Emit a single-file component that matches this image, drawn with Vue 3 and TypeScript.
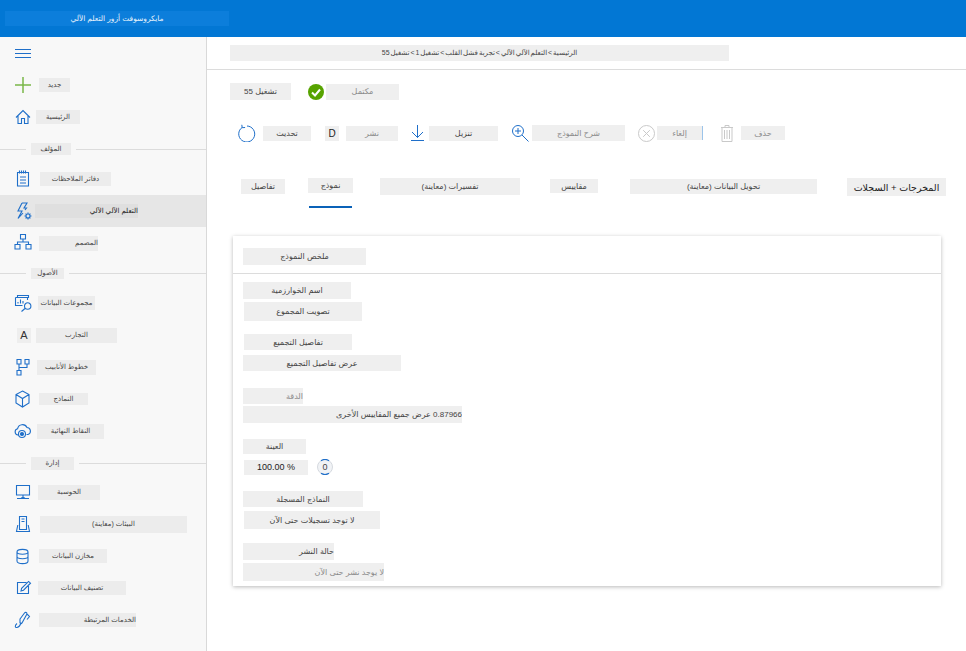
<script setup lang="ts">
interface Nav { kind: 'item' | 'section'; t: string; icon?: string[]; color?: string; ml?: number; w?: number; h?: number; end?: boolean; active?: boolean; letter?: boolean; dots?: string[]; rowH?: number; lift?: number; }
interface Tool { t?: string; icon?: string[]; ml: number; w: number; h: number; muted?: boolean; tint?: string; edge?: boolean; }
interface Tab { t: string; w: number; h: number; ml: number; top: number; active?: boolean; big?: boolean; }
interface Field { t: string; w: number; h: number; mt: number; ml: number; end?: boolean; muted?: boolean; strong?: boolean; info?: boolean; }

const nav: Nav[] = [
  { kind: 'item', t: '', icon: ['M1 5.500h16M1 9.500h16M1 13.500h16'] },
  { kind: 'item', t: 'جديد', icon: ['M9 1v16M1 9h16'], color: '#7ab648', ml: 7, w: 31, h: 14 },
  { kind: 'item', t: 'الرئيسية', icon: ['M2 9.500 9 2.500l7 7M4 7.500v8h3.500v-5h3v5H14v-8'], ml: 4, w: 44, h: 14 },
  { kind: 'section', t: 'المؤلف', w: 40, h: 12, rowH: 30, lift: -2 },
  { kind: 'item', t: 'دفاتر الملاحظات', icon: ['M3.500 2.500h11v13.500h-11zM5.500 .5v3M7.500 .5v3M9.500 .5v3M11.500 .5v3M6 7h6M6 10h6M6 13h6'], ml: 8, w: 71, h: 14 },
  { kind: 'item', t: 'التعلم الآلي الآلي', icon: ['M8 1 4 9h4l-4 7.500 5-5.500M8 1h5l-3 5h2.500L11 8', 'M14 10.500v1M14 16.500v1M10.500 14h1M16.500 14h1M11.600 11.600l.7.7M15.700 15.700l.7.7M16.400 11.600l-.7.7M12.300 15.700l-.7.7M16 14a2 2 0 1 1-4 0 2 2 0 0 1 4 0z'], ml: 3, w: 103, h: 14, end: true, active: true },
  { kind: 'item', t: 'المصمم', icon: ['M6.500 .5h5v4.500h-5zM9 5v3M3.500 10.500V8h11v2.500M1 10.500h5v4.500H1zM12 10.500h5v4.500h-5z'], ml: 7, w: 59, h: 15, end: true },
  { kind: 'section', t: 'الأصول', w: 33, h: 11, rowH: 28, lift: 0 },
  { kind: 'item', t: 'مجموعات البيانات', icon: ['M3.500 3V1.500h11V4M1.500 3.500h12V6M1.500 3.500v8h7M4 9.500V8M6.500 9.500V5.500M9 9.500V7', 'M10.500 12a3.200 3.200 0 1 0 6.400-.001A3.200 3.200 0 0 0 10.500 12zM11 14.500 7.500 17.500'], ml: 6, w: 57, h: 14 },
  { kind: 'item', t: 'التجارب', letter: true, ml: 4, w: 81, h: 15 },
  { kind: 'item', t: 'خطوط الأنابيب', icon: ['M3 1.500h4v4.500H3zM11 1.500h4v4.500h-4zM3 12.500h4V17H3zM5 6v6.500M5 9.500h8V6'], ml: 5, w: 59, h: 15 },
  { kind: 'item', t: 'النماذج', icon: ['M8.500 1 15 4.500V13l-6.500 4L2 13V4.500zM2 4.500l6.500 4 6.500-4M8.500 8.500V17'], ml: 7, w: 49, h: 12 },
  { kind: 'item', t: 'النقاط النهائية', icon: ['M5 13H4a3.200 3.200 0 0 1-.4-6.300A5 5 0 0 1 13 5.500a3.600 3.600 0 0 1 1 7h-1.500', 'M11.500 12a3.500 3.500 0 1 1-7 0 3.500 3.500 0 0 1 7 0z'], dots: ['8,12'], ml: 5, w: 67, h: 15 },
  { kind: 'section', t: 'إدارة', w: 43, h: 13, rowH: 29, lift: -3 },
  { kind: 'item', t: 'الحوسبة', icon: ['M2.500 2.500h13V12h-13zM9 12v2M3 15.500h12M7 15.500 9 14l2 1.500'], ml: 6, w: 62, h: 15 },
  { kind: 'item', t: 'البيئات (معاينة)', icon: ['M5.500 1.500h7v13h-7zM7.500 4h3M7.500 6.500h3M3.800 10 2.500 16.500h13L14.200 10'], ml: 8, w: 147, h: 17 },
  { kind: 'item', t: 'مخازن البيانات', icon: ['M3 5c0-3.500 11-3.500 11 0v9c0 3.500-11 3.500-11 0zM3 5c0 3 11 3 11 0M3 9.500c0 3 11 3 11 0'], ml: 7, w: 68, h: 14 },
  { kind: 'item', t: 'تصنيف البيانات', icon: ['M12.500 3.500h-9v11h11v-9M7 12l.6-2.600 7-7L16.500 4.200l-7 7z'], ml: 6, w: 88, h: 14 },
  { kind: 'item', t: 'الخدمات المرتبطة', icon: ['M3 12.500c-2.500 2-2 4.500 0 4 2-.5 3.500-3 4-5M6 8l4.500-6c1-1.300 3-.3 2.300 1.300L8 12c-.7 1.300-2.500.5-2-1zM12.500 2.500l3 3-2.500 3'], ml: 7, w: 97, h: 14, end: true },
];

const blue = '#1f6fc9';
const grey = '#c9c9c9';
const tools: Tool[] = [
  { icon: ['M4.200 3.400a8 8 0 1 0 4.800-1.400M3.800 .8l.4 2.900 2.900-.2'], ml: 8, w: 18, h: 18, tint: blue },
  { t: 'تحديث', ml: 7, w: 48, h: 15 },
  { t: 'D', ml: 14, w: 14, h: 15 },
  { t: 'نشر', ml: 7, w: 52, h: 15, muted: true },
  { icon: ['M6.500 0v12.500M1 7l5.500 5.500L12 7M0 15.500h13'], ml: 13, w: 13, h: 17, tint: blue },
  { t: 'تنزيل', ml: 5, w: 69, h: 15 },
  { icon: ['M6 .5a5.500 5.500 0 1 0 0 11 5.500 5.500 0 0 0 0-11zM10 10l6.500 6.500M6 3v6M3 6h6'], ml: 14, w: 17, h: 17, tint: blue },
  { t: 'شرح النموذج', ml: 3, w: 93, h: 16, muted: true },
  { icon: ['M8.500 .5a8 8 0 1 0 0 16 8 8 0 0 0 0-16zM5.200 5.200l6.600 6.600M11.800 5.200l-6.600 6.600'], ml: 13, w: 17, h: 17, tint: grey },
  { t: 'إلغاء', ml: 2, w: 45, h: 14, edge: true, muted: true },
  { icon: ['M1 2.500h12M5 2.500V.5h4v2M2 2.500v14h10v-14M4.500 5v9M7 5v9M9.500 5v9'], ml: 18, w: 14, h: 17, tint: grey },
  { t: 'حذف', ml: 7, w: 44, h: 14, muted: true },
];

const tabs: Tab[] = [
  { t: 'تفاصيل', w: 44, h: 15, ml: 11, top: 1 },
  { t: 'نموذج', w: 45, h: 15, ml: 23, top: 0, active: true },
  { t: 'تفسيرات (معاينة)', w: 140, h: 17, ml: 27, top: 0 },
  { t: 'مقاييس', w: 48, h: 14, ml: 30, top: 1 },
  { t: 'تحويل البيانات (معاينة)', w: 187, h: 15, ml: 32, top: 1 },
  { t: 'المخرجات + السجلات', w: 99, h: 18, ml: 30, top: 0, big: true },
];

const fields: Field[] = [
  { t: 'اسم الخوارزمية', w: 108, h: 17, mt: 8, ml: 0 },
  { t: 'تصويت المجموع', w: 118, h: 19, mt: 3, ml: 1 },
  { t: 'تفاصيل التجميع', w: 108, h: 16, mt: 13, ml: 1 },
  { t: 'عرض تفاصيل التجميع', w: 158, h: 16, mt: 5, ml: 0 },
  { t: 'الدقة', w: 60, h: 16, mt: 17, ml: 0, end: true, muted: true },
  { t: '0.87966 عرض جميع المقاييس الأخرى', w: 219, h: 17, mt: 2, ml: 0, end: true },
  { t: 'العينة', w: 63, h: 15, mt: 16, ml: 0 },
  { t: '100.00 %', w: 64, h: 15, mt: 5, ml: 1, strong: true, info: true },
  { t: 'النماذج المسجلة', w: 120, h: 16, mt: 16, ml: 0 },
  { t: 'لا توجد تسجيلات حتى الآن', w: 136, h: 18, mt: 4, ml: 1 },
  { t: 'حالة النشر', w: 91, h: 17, mt: 14, ml: 0, end: true },
  { t: 'لا يوجد نشر حتى الآن', w: 141, h: 18, mt: 3, ml: 0, end: true, muted: true },
];

function size(w?: number, h?: number, ml?: number) {
  return { width: `${w}px`, height: `${h}px`, marginLeft: `${ml ?? 0}px` };
}
function sectionRow(n: Nav) {
  return { height: `${n.rowH}px`, paddingBottom: `${Math.max(n.lift ?? 0, 0)}px`, paddingTop: `${Math.max(-(n.lift ?? 0), 0)}px` };
}
</script>

<template>
  <div class="app">
    <header class="topbar"><div class="brand" dir="rtl">مايكروسوفت أزور التعلم الآلي</div></header>
    <div class="body">
      <nav class="side">
        <template v-for="(n, i) in nav" :key="i">
          <div v-if="n.kind === 'section'" class="section" :style="sectionRow(n)">
            <span class="rule first"></span>
            <span class="box tiny" dir="rtl" :style="size(n.w, n.h)">{{ n.t }}</span>
            <span class="rule"></span>
          </div>
          <div v-else class="item" :class="{ active: n.active }">
            <span v-if="n.letter" class="letter">A</span>
            <svg v-else class="ico" width="18" height="18" viewBox="0 0 18 18" fill="none" :stroke="n.color || blue" :stroke-width="n.color ? 1.500 : 1.100">
              <path v-for="(d, k) in n.icon" :key="k" :d="d" />
              <circle v-for="(c, k) in n.dots" :key="k" :cx="c.split(',')[0]" :cy="c.split(',')[1]" r="1.500" :fill="n.color || blue" />
            </svg>
            <span v-if="n.t" class="box tiny" :class="{ end: n.end }" dir="rtl" :style="size(n.w, n.h, n.ml)">{{ n.t }}</span>
          </div>
        </template>
      </nav>

      <main class="main">
        <div class="crumbs">
          <span class="box crumb-text" dir="rtl" :style="size(499, 16)">الرئيسية &gt; التعلم الآلي الآلي &gt; تجربة فشل القلب &gt; تشغيل 1 &gt; تشغيل 55</span>
        </div>

        <div class="content">
          <div class="title">
            <span class="box" dir="rtl" :style="size(61, 17)">تشغيل 55</span>
            <svg class="check" width="16" height="16" viewBox="0 0 16 16">
              <circle cx="8" cy="8" r="8" fill="#57a300" />
              <path d="M4 8.500 7 11.500 12 5.500" fill="none" stroke="#fff" stroke-width="2" />
            </svg>
            <span class="box muted" dir="rtl" :style="size(73, 16, 2)">مكتمل</span>
          </div>

          <div class="toolbar">
            <template v-for="(b, i) in tools" :key="i">
              <svg v-if="b.icon" :width="b.w" :height="b.h" :viewBox="`0 0 ${b.w} ${b.h}`" fill="none" :stroke="b.tint" stroke-width="1" :style="size(b.w, b.h, b.ml)">
                <path v-for="(d, k) in b.icon" :key="k" :d="d" />
              </svg>
              <span v-else class="box" :class="{ muted: b.muted, edge: b.edge, plain: b.t === 'D' }" dir="rtl" :style="size(b.w, b.h, b.ml)">{{ b.t }}</span>
            </template>
          </div>

          <div class="tabs">
            <div v-for="(t, i) in tabs" :key="i" class="tab" :style="{ marginLeft: `${t.ml}px` }">
              <span class="box" :class="{ big: t.big, shift: t.top }" dir="rtl" :style="size(t.w, t.h)">{{ t.t }}</span>
              <span v-if="t.active" class="underline"></span>
            </div>
          </div>

          <section class="card">
            <div class="card-head">
              <span class="box" dir="rtl" :style="size(123, 17)">ملخص النموذج</span>
            </div>
            <div class="card-body">
              <div v-for="(f, i) in fields" :key="i" class="field" :style="{ marginTop: `${f.mt}px` }">
                <span class="box" :class="{ end: f.end, muted: f.muted, number: f.strong }" :dir="f.strong ? 'ltr' : 'rtl'" :style="size(f.w, f.h, f.ml)">{{ f.t }}</span>
                <span v-if="f.info" class="info">
                  <svg width="16" height="16" viewBox="0 0 16 16" fill="none">
                    <circle cx="8" cy="8" r="7.500" fill="#f1f3f6" stroke="#d5d9df" />
                    <path d="M4 1.700a7.500 7.500 0 0 1 8 0M4 14.300a7.500 7.500 0 0 0 8 0" stroke="#1f6fc9" stroke-width="1.200" />
                  </svg>
                  <span class="digit">0</span>
                </span>
              </div>
            </div>
          </section>
        </div>
      </main>
    </div>
  </div>
</template>

<style>
html, body { margin: 0; overflow: hidden; background: #fff; }
</style>

<style scoped>
.app {
  width: 966px;
  height: 651px;
  display: flex;
  flex-direction: column;
  font-family: "Liberation Sans", "DejaVu Sans", sans-serif;
  color: #333;
  overflow: hidden;
}
.topbar {
  height: 37px;
  flex: none;
  background: #0277d4;
  display: flex;
  align-items: flex-start;
  padding: 11px 0 0 5px;
  box-sizing: border-box;
}
.brand {
  width: 224px;
  height: 15px;
  background: #0c7edb;
  color: #e8f3fc;
  font-size: 7.500px;
  display: flex;
  align-items: center;
  justify-content: center;
}
.body { flex: 1; display: flex; min-height: 0; }
.side {
  width: 206px;
  flex: none;
  background: #f8f8f8;
  border-right: 1px solid #d9d9d9;
}
.item {
  height: 32px;
  display: flex;
  align-items: center;
  box-sizing: border-box;
}
.item.active { background: #e6e6e6; }
.item.active .box { background: #dfdfdf; color: #222; }
.ico { margin-left: 14px; flex: none; }
.letter {
  width: 14px;
  height: 15px;
  margin: 0 1px 0 17px;
  background: #eeeeee;
  color: #333;
  font-size: 11px;
  display: flex;
  align-items: center;
  justify-content: center;
  flex: none;
}
.section {
  display: flex;
  align-items: center;
  box-sizing: border-box;
}
.rule { height: 1px; flex: 1; background: #dcdcdc; margin-left: 5px; }
.rule.first { flex: none; width: 26px; margin: 0 5px 0 0; }
.box {
  display: flex;
  align-items: center;
  justify-content: center;
  flex: none;
  background: #efefef;
  color: #444;
  font-size: 8px;
  white-space: nowrap;
  overflow: hidden;
  box-sizing: border-box;
}
.box.tiny { font-size: 7px; background: #ececec; }
.box.end { justify-content: flex-start; }
.box.muted { color: #8a8a8a; }
.box.plain { color: #222; font-size: 10px; }
.box.number { color: #222; font-size: 9px; }
.box.edge { box-shadow: 1px 0 0 #9cc4ea; }
.box.big { font-size: 9.500px; color: #222; }
.box.shift { margin-top: 1px; }
.crumb-text { font-size: 7px; word-spacing: -1px; }
.main { flex: 1; min-width: 0; }
.crumbs {
  height: 33px;
  box-sizing: border-box;
  padding: 8px 0 0 23px;
  border-bottom: 1px solid #dcdcdc;
}
.content { padding: 13px 0 0 23px; }
.title { display: flex; align-items: center; height: 17px; }
.check { margin-left: 17px; flex: none; }
.toolbar { display: flex; align-items: center; height: 18px; margin-top: 24px; }
.toolbar svg { flex: none; }
.tabs { display: flex; margin-top: 36px; height: 30px; }
.tab { display: flex; flex-direction: column; }
.underline { margin: auto 0 0 1px; width: 43px; height: 2px; background: #0a62b8; }
.card {
  margin: 28px 0 0 3px;
  width: 708px;
  height: 350px;
  background: #fff;
  box-shadow: 0 1px 4px rgba(0, 0, 0, 0.28);
}
.card-head {
  height: 38px;
  box-sizing: border-box;
  padding: 12px 0 0 10px;
  border-bottom: 1px solid #dcdcdc;
}
.card-body { padding-left: 10px; }
.field { display: flex; align-items: center; }
.info {
  position: relative;
  margin-left: 9px;
  width: 16px;
  height: 16px;
  display: flex;
  align-items: center;
  justify-content: center;
}
.info svg { position: absolute; inset: 0; }
.digit { position: relative; font-size: 9px; color: #444; }
</style>
